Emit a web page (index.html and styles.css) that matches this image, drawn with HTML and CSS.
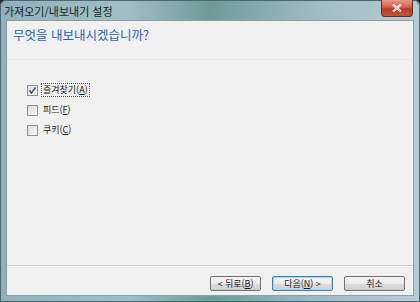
FILE: index.html
```html
<!DOCTYPE html>
<html lang="ko">
<head>
  <meta charset="UTF-8">
  <title>가져오기/내보내기 설정</title>
  <link rel="stylesheet" href="styles.css">
</head>
<body>
  <div class="window">
    <div class="titlebar">
      <span class="title">가져오기/내보내기 설정</span>
      <button class="close" aria-label="닫기">
        <svg viewBox="0 0 10 8" width="10" height="8">
          <path d="M1 0.5 L9 7.5 M9 0.5 L1 7.5" stroke="#fff" stroke-width="2.2" />
          <path d="M1 0.5 L9 7.5 M9 0.5 L1 7.5" stroke="#7a2a20" stroke-width="0.6" opacity="0.5" />
        </svg>
      </button>
    </div>

    <div class="client">
      <div class="header">무엇을 내보내시겠습니까?</div>

      <div class="content">
        <label class="option">
          <span class="box checked">
            <svg viewBox="0 0 9 9" width="9" height="9">
              <path d="M1.5 4.5 L3.5 7 L7.5 1.5" fill="none" stroke="#2c4a8c" stroke-width="1.4" />
            </svg>
          </span>
          <span class="text focus">즐겨찾기(<u>A</u>)</span>
        </label>
        <label class="option">
          <span class="box"></span>
          <span class="text">피드(<u>F</u>)</span>
        </label>
        <label class="option">
          <span class="box"></span>
          <span class="text">쿠키(<u>C</u>)</span>
        </label>
      </div>

      <div class="footer">
        <button class="btn">&lt; 뒤로(<u>B</u>)</button>
        <button class="btn default">다음(<u>N</u>) &gt;</button>
        <button class="btn cancel">취소</button>
      </div>
    </div>
  </div>
</body>
</html>
```

FILE: styles.css
```css
/* Base */
body {
  margin: 0;
  background: #2a2a22;
  font-family: "Noto Sans CJK KR", "Noto Sans", sans-serif;
}

.window {
  width: 420px;
  height: 302px;
  box-sizing: border-box;
  display: flex;
  flex-direction: column;
  padding: 0 6px 6px 6px;
  background: linear-gradient(90deg, #8fb0bc 0%, #a3bfc6 30%, #6f9a98 50%, #9fbcc4 75%, #b5ccd6 100%);
  border-radius: 6px 6px 0 0;
  box-shadow: inset 0 0 0 1px #4d6670;
}

/* Title bar */
.titlebar {
  height: 20px;
  display: flex;
  align-items: flex-start;
  justify-content: space-between;
}

.title {
  font-size: 11px;
  line-height: 14px;
  margin-top: 4px;
  margin-left: -2px;
  color: #1c1c1c;
}

.close {
  all: unset;
  width: 32px;
  height: 17px;
  margin-right: 1px;
  display: flex;
  align-items: center;
  justify-content: center;
  background: linear-gradient(#e49a88 0%, #d1604a 45%, #b83a24 55%, #c9533c 100%);
  border: 1px solid #6d2a20;
  border-top: none;
  border-radius: 0 0 4px 4px;
  box-sizing: border-box;
}

/* Client area */
.client {
  flex: 1;
  display: flex;
  flex-direction: column;
  background: #f0f0f0;
  border: 1px solid #8a9ea6;
}

.header {
  height: 39px;
  box-sizing: border-box;
  padding: 6px 0 0 6px;
  font-size: 12.5px;
  line-height: 16px;
  color: #1f62b8;
  border-bottom: 1px solid #e2e8ec;
}

.content {
  flex: 1;
  display: flex;
  flex-direction: column;
  gap: 6px;
  padding: 23px 0 0 20px;
}

.option {
  display: flex;
  align-items: center;
  gap: 3px;
  height: 14px;
  font-size: 9px;
  color: #1a1a1a;
}

.box {
  width: 11px;
  height: 11px;
  box-sizing: border-box;
  border: 1px solid #8e8f8f;
  background: linear-gradient(135deg, #dcdcdc, #f6f6f6);
  display: flex;
  align-items: center;
  justify-content: center;
}

.text {
  padding: 0 1px;
  line-height: 12px;
  border: 1px solid transparent;
}

.text.focus {
  border: 1px dotted #555;
}

/* Footer */
.footer {
  height: 30px;
  border-top: 1px solid #cfcfcf;
  box-shadow: inset 0 1px 0 #fff;
  display: flex;
  justify-content: flex-end;
  align-items: flex-start;
  padding: 10px 8px 0 0;
  box-sizing: border-box;
}

.btn {
  all: unset;
  box-sizing: border-box;
  width: 61px;
  height: 15px;
  margin-left: 11px;
  text-align: center;
  font-size: 9px;
  line-height: 13px;
  color: #1a1a1a;
  background: linear-gradient(#f4f4f4 0%, #ebebeb 50%, #dddddd 51%, #cfcfcf 100%);
  border: 1px solid #707070;
  border-radius: 2px;
}

.btn:first-child {
  width: 51px;
}

.btn.default {
  border-color: #3c7fb1;
  box-shadow: inset 0 0 0 1px #9fdcf5;
}
```
